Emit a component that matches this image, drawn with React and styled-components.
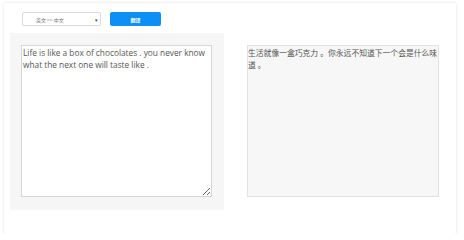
import React from "react";
import styled, { createGlobalStyle } from "styled-components";

const Global = createGlobalStyle`
  html, body {
    margin: 0;
    background: #ffffff;
  }
  body {
    font-family: "Open Sans", "Noto Sans CJK SC", sans-serif;
  }
`;

const Card = styled.div`
  box-sizing: border-box;
  width: 452px;
  height: 231px;
  margin: 3px 0 0 4px;
  background: #fff;
  border-radius: 2px;
  box-shadow: 0 0 3px rgba(0, 0, 0, 0.14);
  padding: 9px 0 0 6px;
`;

const Toolbar = styled.div`
  display: flex;
  align-items: center;
  gap: 9px;
  padding-left: 12px;
  height: 14px;
`;

const Select = styled.div`
  box-sizing: border-box;
  width: 79px;
  height: 14px;
  border: 1px solid #d9d9d9;
  border-radius: 2px;
  background: #fff;
  display: flex;
  align-items: center;
  justify-content: space-between;
  padding: 0 2px 0 13px;
  font-family: "Noto Sans CJK SC", sans-serif;
  font-size: 5px;
  color: #777;
`;

const Arrow = styled.span`
  font-size: 5px;
  color: #444;
`;

const Button = styled.button`
  box-sizing: border-box;
  width: 51px;
  height: 14px;
  border: none;
  border-radius: 2px;
  background: #0d8ff5;
  color: #fff;
  font-family: "Noto Sans CJK SC", sans-serif;
  font-size: 5px;
  font-weight: 700;
  padding: 0;
`;

const Body = styled.div`
  display: flex;
  align-items: flex-start;
  gap: 23px;
  margin-top: 7px;
`;

const Panel = styled.div`
  box-sizing: border-box;
  width: 214px;
  height: 177px;
  background: #f6f6f6;
  padding: 12px 11px;
`;

const Area = styled.textarea`
  box-sizing: border-box;
  display: block;
  width: ${(p) => p.$w}px;
  height: 152px;
  margin: ${(p) => p.$top}px 0 0 0;
  padding: 1px ${(p) => (p.$filled ? 0 : 1)}px;
  border: 1px solid ${(p) => (p.$filled ? "#e2e2e2" : "#d6d6d6")};
  border-radius: 0;
  background: ${(p) => (p.$filled ? "#f7f7f7" : "#fff")};
  resize: ${(p) => (p.$filled ? "none" : "both")};
  font-family: "Open Sans", "Noto Sans CJK SC", sans-serif;
  font-size: ${(p) => p.$size}px;
  line-height: 12px;
  color: #555;
  outline: none;
  overflow: hidden;
`;

export default function App() {
  return (
    <>
      <Global />
      <Card>
        <Toolbar>
          <Select>
            <span>英文 &gt;&gt; 中文</span>
            <Arrow>▾</Arrow>
          </Select>
          <Button>翻译</Button>
        </Toolbar>
        <Body>
          <Panel>
            <Area
              $w={191}
              $top={0}
              $size={8.3}
              defaultValue="Life is like a box of chocolates . you never know what the next one will taste like ."
            />
          </Panel>
          <Area
            $w={192}
            $top={12}
            $size={7.8}
            $filled
            readOnly
            defaultValue="生活就像一盒巧克力 。你永远不知道下一个会是什么味道 。"
          />
        </Body>
      </Card>
    </>
  );
}
